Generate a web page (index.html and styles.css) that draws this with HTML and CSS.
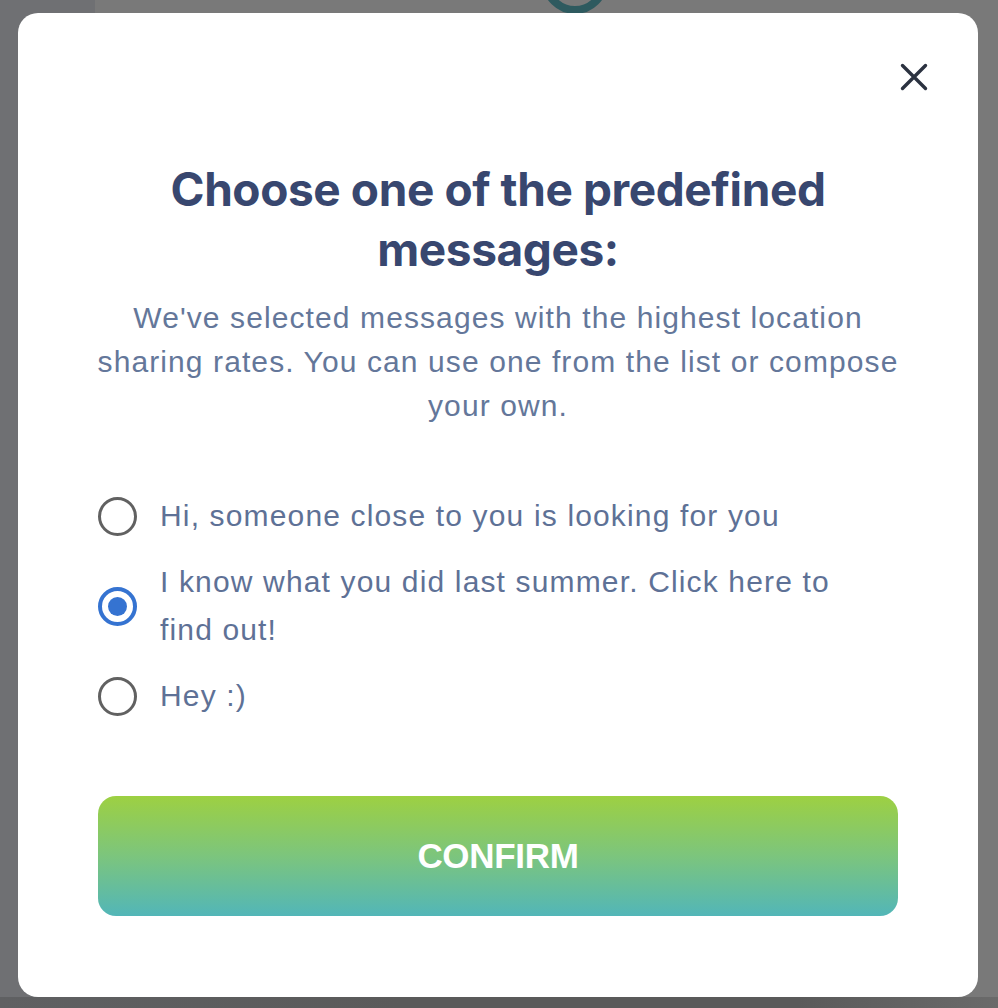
FILE: index.html
```html
<!DOCTYPE html>
<html lang="en">
<head>
  <meta charset="UTF-8" />
  <meta name="viewport" content="width=device-width, initial-scale=1" />
  <title>Choose a message</title>
  <link rel="stylesheet" href="styles.css">
</head>
<body>
  <div class="page">
    <div class="sidebar"></div>
    <div class="main">
      <div class="avatar"></div>
    </div>
  </div>
  <div class="footer-bar"></div>

  <div class="overlay">
    <div class="modal">
      <div class="modal-top">
        <button class="close" aria-label="Close">
          <svg width="28" height="28" viewBox="0 0 28 28">
            <path d="M2.5 2.5 L25.5 25.5 M25.5 2.5 L2.5 25.5" stroke="#2b3240" stroke-width="3.4" stroke-linecap="round" fill="none"/>
          </svg>
        </button>
      </div>

      <h1 class="title">Choose one of the predefined messages:</h1>
      <p class="subtitle">We've selected messages with the highest location<br>sharing rates. You can use one from the list or compose<br>your own.</p>

      <form class="options">
        <label class="option">
          <input type="radio" name="msg" />
          <span>Hi, someone close to you is looking for you</span>
        </label>
        <label class="option">
          <input type="radio" name="msg" checked />
          <span>I know what you did last summer. Click here to find out!</span>
        </label>
        <label class="option">
          <input type="radio" name="msg" />
          <span>Hey :)</span>
        </label>
      </form>

      <button class="confirm" type="button">CONFIRM</button>
    </div>
  </div>
</body>
</html>
```

FILE: styles.css
```css
body { margin: 0; height: 1008px; overflow: hidden; background: #787878; font-family: "Liberation Sans", Arial, sans-serif; }

.page { display: flex; height: 997px; }
.sidebar { width: 95px; background: #6f7073; }
.main { flex: 1; position: relative; background: #797979; }
.avatar { position: absolute; left: 447px; top: -52px; width: 50px; height: 50px; border: 8px solid #2e5a5f; border-radius: 50%; }
.footer-bar { height: 11px; background: linear-gradient(90deg, #5f6062, #5a5a5a 40%, #5a5a5a 80%, #6a6a6a); }

.overlay { position: fixed; inset: 0; padding: 13px 20px 11px 18px; }
.modal { box-sizing: border-box; height: 984px; background: #fff; border-radius: 20px; padding: 50px 80px 80px; display: flex; flex-direction: column; }

.modal-top { display: flex; justify-content: flex-end; margin-right: -30px; height: 28px; }
.close { background: none; border: 0; padding: 0; width: 28px; height: 28px; cursor: pointer; }

.title { margin: 68px 20px 0; text-align: center; font-family: Inter, "Liberation Sans", sans-serif; font-size: 46px; line-height: 60px; font-weight: 700; color: #38476f; letter-spacing: -0.4px; }
.subtitle { margin: 17px -30px 0; text-align: center; font-size: 30px; line-height: 44px; color: #64779a; letter-spacing: 1.1px; white-space: nowrap; }

.options { margin-top: 64px; display: flex; flex-direction: column; gap: 18px; }
.option { display: flex; align-items: center; gap: 23px; font-size: 30px; line-height: 48px; color: #5e7196; letter-spacing: 1.15px; cursor: pointer; }
.option span { max-width: 690px; }
.option input { appearance: none; margin: 0; flex: none; width: 39px; height: 39px; border: 3px solid #616161; border-radius: 50%; box-sizing: border-box; display: grid; place-items: center; }
.option input:checked { border: 4px solid #3573d1; }
.option input:checked::before { content: ""; width: 19px; height: 19px; border-radius: 50%; background: #3573d1; }

.confirm { margin-top: 76px; height: 120px; border: 0; border-radius: 18px; background: linear-gradient(180deg, #9dd042, #7cc57d 50%, #52b6b8); color: #fff; font-family: "Liberation Sans", Arial, sans-serif; font-weight: 700; font-size: 35px; letter-spacing: -0.3px; cursor: pointer; }
```
